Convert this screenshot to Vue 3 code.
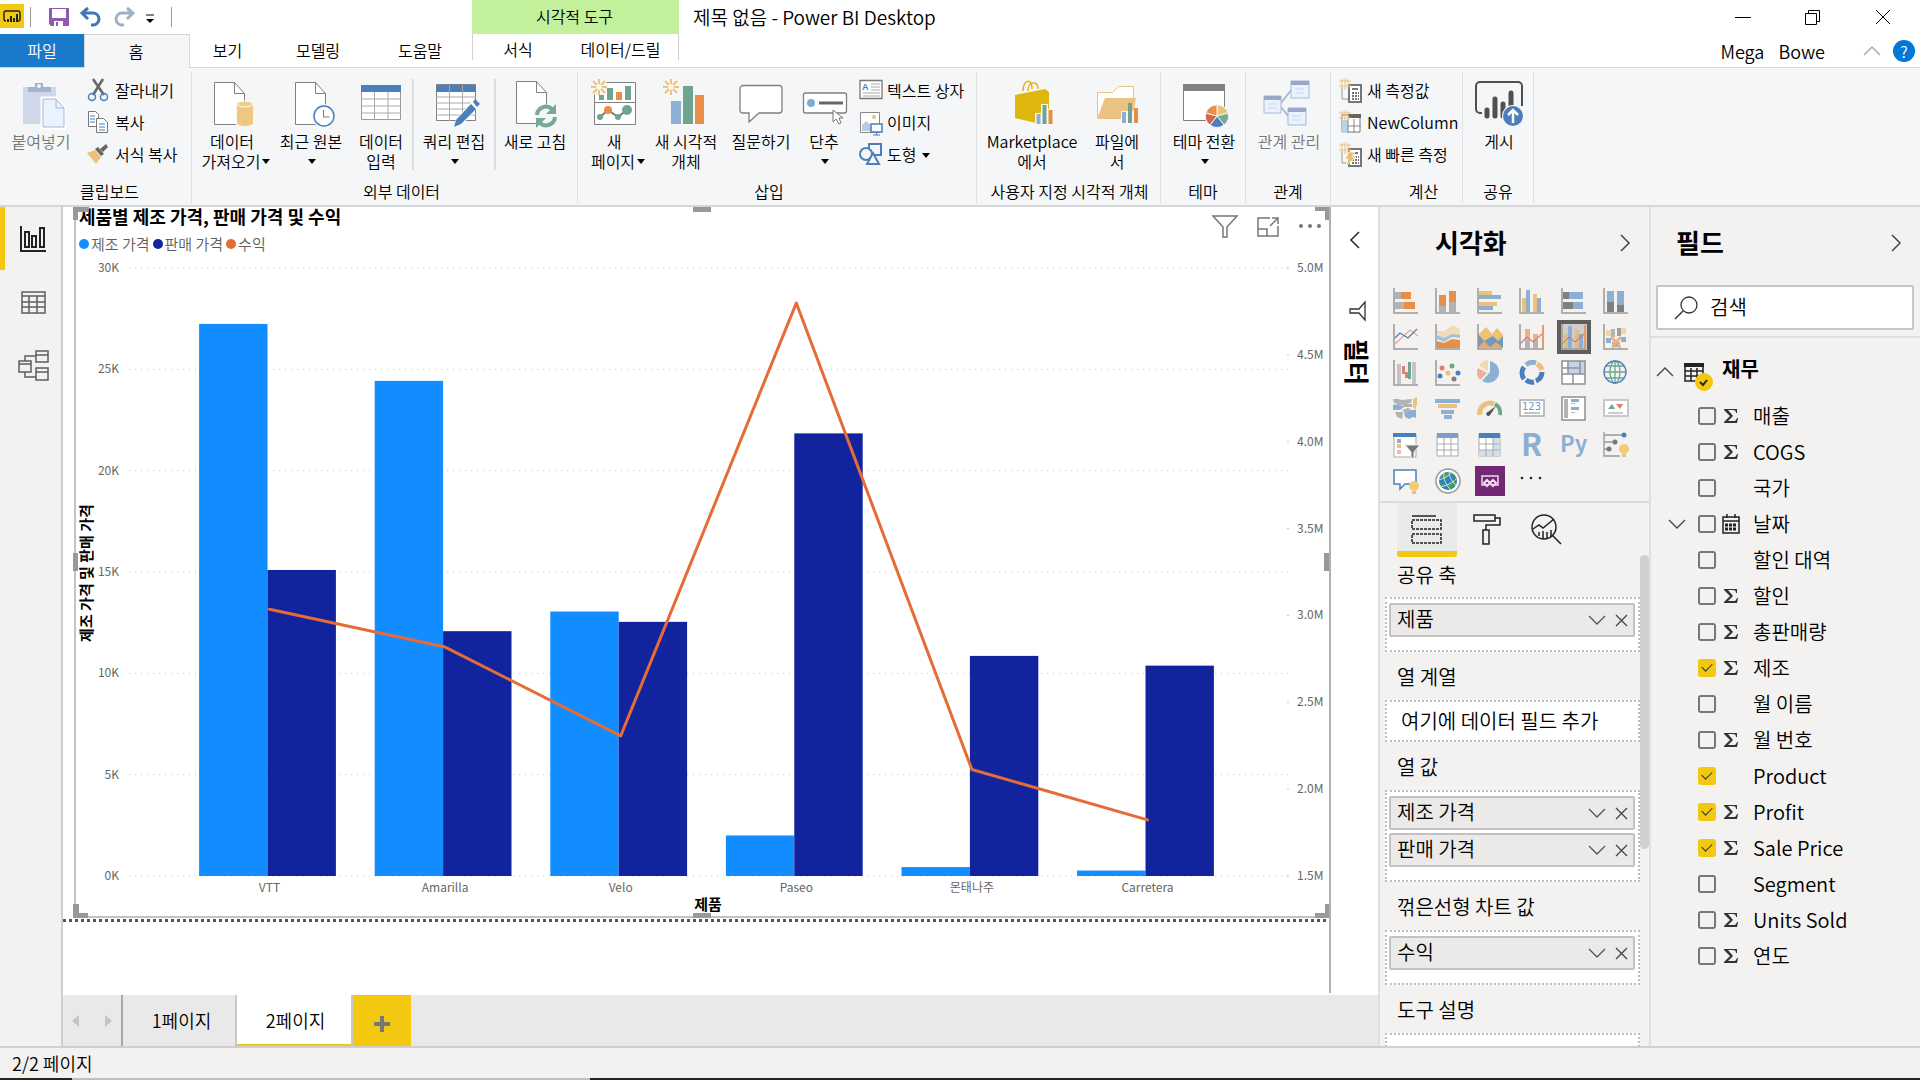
<script setup>
import { ref } from 'vue'

const star = (x, y) =>
  `<g stroke="#ecc27a" stroke-width="2"><path d="M${x} ${y - 8}v5M${x} ${y + 3}v5M${x - 8} ${y}h5M${x + 3} ${y}h5M${x - 6} ${y - 6}l4 4M${x + 2} ${y + 2}l4 4M${x - 6} ${y + 6}l4-4M${x + 2} ${y - 2}l4-4"/></g>`
const page = (x, y) =>
  `<path d="M${x} ${y}h20l10 11v31h-30z" fill="#fff" stroke="#808080"/><path d="M${x + 20} ${y}v11h10" fill="none" stroke="#808080"/>`
const miniTable = `<path d="M3 5h18v17h-18z" fill="#fff" stroke="#777"/>`
const calc = `<path d="M3 9v12h6" fill="none" stroke="#999"/><rect x="10" y="7" width="12" height="17" fill="#fff" stroke="#777" stroke-width="2"/><path d="M13 11h6" stroke="#777" stroke-width="2"/><path d="M13 15h7M13 18h7M13 21h7" stroke="#777" stroke-width="2" stroke-dasharray="2 1"/>`
const smallStar = `<path d="M6 0v12M0 3h12M0 8h12M3 1v10M9 1v10" stroke="#ecc27a" fill="none"/>`

const big = {
  paste: `<path d="M6 8h33v37H6z" fill="#cfd8e8"/><path d="M11 8h7V4h8v4h8v5H11z" fill="#a3b2cf"/><circle cx="22" cy="7" r="2" fill="#f5f6f7"/><path d="M25 19h14l8 9v21H25z" fill="#eaf3fd" stroke="#fff" stroke-width="3"/><path d="M26 20h13l8 9v19H26z" fill="#eaf3fd" stroke="#a9b8d5"/><path d="M39 20v9h8" fill="none" stroke="#a9b8d5"/>`,
  data: page(6.5, 3.5) + `<path d="M28 23v23c0 3 18 3 18 0V23z" fill="#f5f6f7"/><path d="M29 25v19c0 4 16 4 16 0V25z" fill="#efc77f"/><ellipse cx="37" cy="25" rx="8" ry="3" fill="#f1cd8c" stroke="#fff"/>`,
  recent: page(8.5, 3.5) + `<circle cx="37" cy="37" r="12" fill="#f5f6f7"/><circle cx="37" cy="37" r="10" fill="#fff" stroke="#4a7fbb" stroke-width="1.5"/><path d="M36.500 31v7h6" fill="none" stroke="#777"/>`,
  table: `<path d="M4.500 6.500h39v34h-39z" fill="#fff" stroke="#999"/><path d="M4 6h40v7H4z" fill="#4a7fbb"/><path d="M4 20h40M4 27h40M4 34h40M17.500 13v28M31 13v28" stroke="#aaa"/>`,
  query: `<path d="M6.500 5.500h39v36h-39z" fill="#fff" stroke="#808080"/><path d="M7 6h38v7H7z" fill="#4a7fbb"/><path d="M6 18h40M6 24h40M6 30h40M6 36h40M19.500 6v36M32.500 6v36" stroke="#aaa"/><path d="M23 49l3-9 18-20 6 6-18 20z" fill="#fff"/><path d="M24 48l2-7 15-16 5 5-15 15z" fill="#4a7fbb"/><path d="M43 23l2-3 5 5-3 3z" fill="#4a7fbb"/>`,
  refresh: page(5.5, 2.5) + `<circle cx="35" cy="37" r="12" fill="#f5f6f7"/><g fill="none" stroke="#78a896" stroke-width="4"><path d="M26 36a9 9 0 0 1 15-6"/><path d="M44 38a9 9 0 0 1-15 6"/></g><path d="M45 25v10H35zM25 49V39h10z" fill="#78a896"/>`,
  newpage: `<path d="M4.500 3.500h41v42h-41z" fill="#fff" stroke="#808080"/><path d="M4 23.500h42" stroke="#808080"/><circle cx="9" cy="8" r="9" fill="#f5f6f7"/><path d="M9 16h5v5H9zM17 9h6v12h-6zM35 7h6v14h-6z" fill="#6fa58f"/><path d="M26 13h6v8h-6z" fill="#e88e47"/><path d="M10 38l8-7 10 7 9-7" fill="none" stroke="#777" stroke-width="2"/><g fill="#6fa58f"><circle cx="10" cy="38" r="3"/><circle cx="28" cy="38" r="3"/><circle cx="37" cy="31" r="5"/></g><circle cx="18" cy="31" r="4" fill="#e88e47"/>` + star(9, 8),
  newvisual: `<path d="M9 22h10v23H9z" fill="#8eafd4"/><path d="M21 7h10v38H21z" fill="#6fa58f"/><path d="M33 16h9v29h-9z" fill="#e88e47"/>` + star(9, 8),
  question: `<path d="M6 6.500h36a3 3 0 0 1 3 3V31a3 3 0 0 1-3 3H22l-10 9v-9H6a3 3 0 0 1-3-3V9.500a3 3 0 0 1 3-3z" fill="#fff" stroke="#808080" stroke-width="1.300"/>`,
  button: `<rect x="3.500" y="14" width="43" height="20" rx="2" fill="#fff" stroke="#808080" stroke-width="1.300"/><circle cx="11" cy="24" r="4" fill="#80add4"/><path d="M19 24h24" stroke="#666" stroke-width="3"/><path d="M33 31v12l3-3 3 5 2-1-2-5h4z" fill="#fff" stroke="#777"/>`,
  market: `<path d="M15 12c0-13 10-12 9-2M20 12c0-11 11-10 10-2" fill="none" stroke="#dcb40f" stroke-width="1.500"/><path d="M7 16l30-6 4 3v30l-13 1-21-5z" fill="#dfb60e"/><path d="M28 35h5v10h-5zM34 26h5v19h-5zM40 31h5v14h-5z" stroke="#f5f6f7" fill="#f5f6f7" stroke-width="2"/><path d="M28.500 35h4v10h-4z" fill="#8eafd4"/><path d="M34.500 26h4v19h-4z" fill="#6fa58f"/><path d="M40.500 31h4v14h-4z" fill="#e88e47"/>`,
  file: `<path d="M4.500 39V13.500h15l6-6h15V20" fill="#fff" stroke="#e8c084"/><path d="M12 19h31l-4 21H4z" fill="#eac282"/><path d="M28 32h19v12H28z" fill="#f5f6f7"/><path d="M29 33h4v11h-4z" fill="#8eafd4"/><path d="M35 24h4v20h-4z" fill="#6fa58f"/><path d="M41 29h4v15h-4z" fill="#e88e47"/>`,
  theme: `<path d="M3.500 5.500h41v36h-41z" fill="#fff" stroke="#808080"/><path d="M3 5h42v7H3z" fill="#808080"/><circle cx="37" cy="37" r="12" fill="#f5f6f7"/><g stroke="#f5f6f7"><path d="M37 37V26a11 11 0 0 1 11 8z" fill="#ecc27a"/><path d="M37 37l11-3a11 11 0 0 1-4 12z" fill="#78a896"/><path d="M37 37l7 9a11 11 0 0 1-14 0z" fill="#4a7fbb"/><path d="M37 37l-7 9a11 11 0 0 1-4-12z" fill="#d9634a"/><path d="M37 37l-11-3a11 11 0 0 1 11-8z" fill="#e88e47"/></g>`,
  relation: `<path d="M16 24L27 10M16 28l8 10" stroke="#a9b8d5" stroke-width="2"/><g fill="#eaf3fd" stroke="#a9b8d5"><path d="M26 2h18v17H26zM-1 17h17v17H-1zM23 29h18v17H23z"/></g><path d="M26 2h18v4H26zM-1 17h17v4H-1zM23 29h18v4H23z" fill="#98a9c8"/><path d="M30 10h9M30 14h9M3 25h9M3 29h9M27 37h9M27 41h9" stroke="#cbd9ee"/>`,
  publish: `<path d="M7 34H5a4 4 0 0 1-4-4V7a4 4 0 0 1 4-4h38a4 4 0 0 1 4 4v20" fill="none" stroke="#505050" stroke-width="2"/><g stroke="#505050" stroke-width="5" stroke-linecap="round"><path d="M12 31v6M20 20v17M28 25v12M36 14v20"/></g><circle cx="38" cy="37" r="11" fill="#f5f6f7"/><circle cx="38" cy="37" r="10" fill="#4a7fbb"/><path d="M38 44V32M33 36l5-5 5 5" fill="none" stroke="#fff" stroke-width="2.500"/>`
}

const small = {
  cut: `<path d="M6 1l11 16M16 1L6 17" stroke="#666" stroke-width="2.500"/><g fill="none" stroke="#4a7fbb" stroke-width="1.500"><circle cx="5" cy="19" r="3.500"/><circle cx="17" cy="19" r="3.500"/></g>`,
  copy: `<g fill="#fff" stroke="#777"><path d="M1.500 1.500h7l3 3v12h-10z"/><path d="M9.500 8.500h7l4 4v10h-11z"/></g><path d="M3 6h5M3 9h5M3 12h5M12 14h6M12 17h6M12 20h6" stroke="#4a7fbb"/>`,
  brush: `<path d="M0 11l8-3 6 7-5 7z" fill="#ecc27a"/><path d="M8 7l3-2 6 7-3 2z" fill="#666"/><path d="M13 7l6-5 2 3-5 5z" fill="#666"/>`,
  textbox: `<path d="M1 2.500h22v18H1z" fill="#fff" stroke="#777" stroke-width="1.300"/><text x="3" y="12" font-size="9" font-weight="700" fill="#4a7fbb" font-family="Liberation Sans, sans-serif">A</text><path d="M12 6h9M12 9h9M12 12h9M4 15h17M4 18h17" stroke="#aaa"/>`,
  image: `<path d="M1.500 2.500h19v20h-19z" fill="#fff" stroke="#888"/><circle cx="15" cy="7" r="2" fill="#ecc27a"/><path d="M3 21v-6l4-4 6 5v5z" fill="#b9cbe2"/><path d="M12 14h11v8H12z" fill="#fff" stroke="#4a7fbb" stroke-width="1.500"/><path d="M17.500 22v3M14 25h7" stroke="#4a7fbb"/>`,
  shape: `<g fill="#f5f6f7" stroke="#4a7fbb" stroke-width="2"><path d="M10 2h12v11H10z"/><circle cx="7" cy="12" r="6"/><path d="M14 11l6 11H8z"/></g>`,
  measure: calc + smallStar,
  column: miniTable + `<path d="M3 10h6v13H3z" fill="#b9d3ec"/><path d="M9 4h13v4H9z" fill="#666"/><path d="M9 9v14M15 9v14M9 16h13" stroke="#888"/>` + smallStar,
  quick: calc + `<path d="M10 10h6l-3 5h4L7 24l2-7H6z" fill="#eebc6c" stroke="#f5f6f7"/>` + smallStar
}

const groups = [
  { name: '클립보드', cls: 'g-clip', items: [
    { icon: 'paste', text: '붙여넣기', w: 'w82', off: true },
    { list: [{ icon: 'cut', text: '잘라내기' }, { icon: 'copy', text: '복사' }, { icon: 'brush', text: '서식 복사' }] }] },
  { name: '외부 데이터', cls: 'g-data', items: [
    { icon: 'data', text: '데이터', text2: '가져오기', arrow: true, w: 'w80' },
    { icon: 'recent', text: '최근 원본', arrow: true, w: 'w78' },
    { icon: 'table', text: '데이터', text2: '입력', w: 'w62' },
    { sep: true },
    { icon: 'query', text: '쿼리 편집', arrow: true, w: 'w80' },
    { sep: true },
    { icon: 'refresh', text: '새로 고침', w: 'w78' }] },
  { name: '삽입', cls: 'g-insert', items: [
    { icon: 'newpage', text: '새', text2: '페이지', arrow: true, w: 'w72' },
    { icon: 'newvisual', text: '새 시각적', text2: '개체', w: 'w72' },
    { icon: 'question', text: '질문하기', w: 'w78' },
    { icon: 'button', text: '단추', arrow: true, w: 'w48' },
    { list: [{ icon: 'textbox', text: '텍스트 상자' }, { icon: 'image', text: '이미지' }, { icon: 'shape', text: '도형', arrow: true }] }] },
  { name: '사용자 지정 시각적 개체', cls: 'g-custom', items: [
    { icon: 'market', text: 'Marketplace', text2: '에서', w: 'w110' },
    { icon: 'file', text: '파일에', text2: '서', w: 'w60' }] },
  { name: '테마', cls: 'g-theme', items: [{ icon: 'theme', text: '테마 전환', arrow: true, w: 'w86' }] },
  { name: '관계', cls: 'g-theme', items: [{ icon: 'relation', text: '관계 관리', w: 'w86', off: true }] },
  { name: '계산', cls: 'g-calc', items: [
    { list: [{ icon: 'measure', text: '새 측정값' }, { icon: 'column', text: 'NewColumn' }, { icon: 'quick', text: '새 빠른 측정' }] }] },
  { name: '공유', cls: 'g-share', items: [{ icon: 'publish', text: '게시', w: 'w72' }] }
]

const ax = '<path d="M1 0v25h24" fill="none" stroke="#999" stroke-width="1.500"/>'
const bars = list => list.map(([x, y, w, h, c]) => `<path d="M${x} ${y}h${w}v${h}h${-w}z" fill="${c}"/>`).join('')
const O = '#e88e47', G = '#b3b3b3', B = '#8eafd4', Y = '#ecc27a', D = '#808080', N = '#4a7fbb', T = '#6fa58f', R = '#df7f6c'
const bulb = (x, y) => `<circle cx="${x}" cy="${y}" r="5" fill="#f0cc72"/><path d="M${x - 2} ${y + 5}h4v3h-4z" fill="#d8c59a"/>`
const visuals = [
  bars([[2, 4, 6, 7, G], [8, 4, 10, 7, O], [2, 14, 9, 7, G], [11, 14, 11, 7, O]]) + ax,
  bars([[4, 7, 7, 11, O], [4, 18, 7, 6, G], [14, 3, 7, 11, O], [14, 14, 7, 10, G]]) + ax,
  bars([[2, 3, 13, 4, Y], [2, 7, 22, 4, B], [2, 14, 18, 4, Y], [2, 18, 14, 4, B]]) + ax,
  bars([[3, 10, 4, 14, Y], [7, 2, 4, 22, B], [14, 6, 4, 18, Y], [18, 10, 4, 14, B]]) + ax,
  bars([[2, 4, 6, 7, D], [8, 4, 14, 7, B], [2, 14, 10, 7, D], [12, 14, 10, 7, B]]) + ax,
  bars([[4, 3, 7, 11, B], [4, 14, 7, 10, D], [14, 3, 7, 14, B], [14, 17, 7, 7, D]]) + ax,
  ax + `<path d="M2 20L17 6l8 6" fill="none" stroke="#eaa89c" stroke-width="1.300"/><path d="M2 14l5-5 8 5 9-9" fill="none" stroke="${N}" stroke-width="1.300"/>`,
  `<path d="M2 7h7l9-6 7 4v8l-8-1-7 3-8-5z" fill="#f2dcb6"/><path d="M2 11l7 3 8-4 8 1v3l-8-1-8 5-7-3z" fill="#9fc2da"/><path d="M2 17l7 2 8-4 8 1v8H2z" fill="${O}"/>` + ax,
  `<path d="M1 11l8-8 6 7 5-6 6 7v8H1z" fill="#eec272"/><path d="M1 10l6 7 9-5 5 5 5-5v12H1z" fill="#6f9bbd"/><path d="M1 24l6-7 6 6 6-5 7 6z" fill="#f3a56a"/>` + ax,
  bars([[6, 5, 5, 11, '#efb186'], [6, 16, 5, 8, G], [14, 10, 5, 6, '#efb186'], [14, 16, 5, 8, G], [23, 1, 2, 24, '#e99a5c']]) + `<path d="M1 20l7-7 6 5 9-8" fill="none" stroke="${R}" stroke-width="1.300"/>` + ax,
  bars([[3, 10, 4, 14, '#dfbd84'], [7, 2, 4, 22, B], [14, 6, 4, 18, '#dfbd84'], [18, 10, 4, 14, B], [23, 1, 2, 24, '#e99a5c']]) + `<path d="M1 20l7-7 6 5 9-8" fill="none" stroke="#d9634a"/>` + ax,
  bars([[3, 6, 5, 6, '#f0d5a6'], [8, 5, 4, 8, G], [14, 4, 4, 8, '#a89f92'], [18, 4, 5, 6, '#f0d5a6'], [3, 14, 5, 5, B], [18, 13, 5, 5, B], [9, 18, 8, 5, B]]) + `<path d="M8 13l4 4-2 7M18 13l-4 4 3 7" fill="none" stroke="#f0b080" stroke-width="3"/>` + ax,
  bars([[4, 4, 4, 20, '#c4c4c4'], [9, 6, 3, 8, R], [12, 12, 3, 6, R], [15, 2, 3, 17, T], [19, 2, 4, 22, '#c4c4c4']]) + ax,
  ax + `<circle cx="7" cy="8" r="2.500" fill="${R}"/><circle cx="17" cy="6" r="2.500" fill="${T}"/><circle cx="5" cy="16" r="2.500" fill="${N}"/><circle cx="13" cy="13" r="2.500" fill="${Y}"/><circle cx="23" cy="13" r="2.500" fill="${N}"/><circle cx="19" cy="19" r="2.500" fill="${D}"/>`,
  `<path d="M13 12V1a11 11 0 1 1-8 20z" fill="${B}"/><path d="M11 11L2 6a11 11 0 0 1 9-6z" fill="#f0d9b0"/><path d="M10 13l-7 7a11 11 0 0 1-2-12z" fill="#ecb0a2"/>`,
  `<g fill="none" stroke-width="5"><path d="M7 5a10 10 0 0 1 10-2" stroke="${B}"/><path d="M18 4a10 10 0 0 1 5 6" stroke="${Y}"/><path d="M23 12a10 10 0 0 1-6 9M15 22a10 10 0 0 1-8-2M5 19A10 10 0 0 1 5 7" stroke="${N}"/></g>`,
  `<path d="M1 1h23v23H1z" fill="#fff"/><path d="M7 1h17v13H7z" fill="#c3d4ea"/><path d="M1 1h23v23H1zM1 14h23M7 1v13M7 8h12M19 1v13M12 14v10M1 8h6" fill="none" stroke="#909090" stroke-width="1.500"/>`,
  `<g fill="none" stroke-width="1.300"><g stroke="${T}"><ellipse cx="12" cy="12" rx="5" ry="11"/><path d="M12 1v22M1 12h22M3 6h18M3 18h18"/></g><circle cx="12" cy="12" r="11" stroke="${N}"/></g>`,
  `<path d="M0 3l5 0 4 1 10-1-1 4-9 2-8-2zM10 8h9v3h-9zM2 16h8l-1 7-5-2zM9 14l6-2 3 1-6 4z" fill="#b3b3b3"/><path d="M0 9l6-1 5 3-4 3H0zM11 17l6-3h6v8l-3-1-4 2-4-2z" fill="${B}"/><path d="M20 3l4-2v7l-2 6-2-3z" fill="${Y}"/>`,
  bars([[0, 3, 25, 4, B], [3, 8, 19, 4, Y], [6, 14, 13, 4, B], [9, 19, 8, 4, B]]),
  `<path d="M3 19a10 10 0 0 1 14-11" fill="none" stroke="${Y}" stroke-width="5"/><path d="M18 8a10 10 0 0 1 5 11" fill="none" stroke="${T}" stroke-width="4"/><path d="M19 10l-6 9a2 2 0 1 1-2-3z" fill="#505050"/>`,
  `<path d="M1 4h24v16H1z" fill="#fff" stroke="#aaa" stroke-width="1.500"/><text x="3" y="14" font-size="10" font-weight="400" fill="#6c99c8" font-family="DejaVu Sans, sans-serif">123</text><path d="M5 17h16" stroke="#888"/>`,
  `<path d="M1 1h23v23H1z" fill="#fff" stroke="#909090" stroke-width="1.500"/>` + bars([[3, 3, 4, 19, G], [10, 3, 8, 3, B], [10, 7, 4, 1, G], [10, 11, 8, 3, B], [10, 16, 4, 1, G]]),
  `<path d="M1 4h24v16H1z" fill="#fff" stroke="#bbb" stroke-width="1.500"/><path d="M5 13l4-5 3 5z" fill="${T}"/><path d="M13 8h7l-3 5z" fill="${R}"/><path d="M5 17h15" stroke="#999"/>`,
  `<path d="M1 2h22v23H1z" fill="#fff" stroke="#aaa"/>` + bars([[0, 1, 23, 4, N], [4, 7, 4, 4, B], [4, 12, 4, 4, Y], [4, 18, 4, 4, '#efb9ac']]) + `<path d="M12 13h15l-6 7v7l-3-2v-5z" fill="#777" stroke="#f3f2f1"/>`,
  `<path d="M2 2h21v22H2z" fill="#fff" stroke="#aaa"/><path d="M2 1h21v5H2z" fill="#7b9fca"/><path d="M2 12h21M2 18h21M9 6v18M16 6v18" stroke="#aaa"/>`,
  `<path d="M2 2h21v22H2z" fill="#fff" stroke="#aaa"/><path d="M16 6h7v18H2v-6h14z" fill="#cfdfee"/><path d="M2 1h21v5H2z" fill="${N}"/><path d="M2 12h21M2 18h21M9 6v18M16 6v18" stroke="#aaa"/>`,
  `<text x="2" y="24" font-size="31" font-weight="700" fill="${B}" font-family="Noto Sans CJK KR, sans-serif">R</text>`,
  `<text x="-1" y="20" font-size="22" font-weight="700" fill="${B}" font-family="Noto Sans CJK KR, sans-serif">Py</text>`,
  `<path d="M1 0v24h16M1 3h20M1 10h12M1 17h6" fill="none" stroke="#999" stroke-width="1.300"/><circle cx="21" cy="3" r="2.500" fill="${N}"/><circle cx="12" cy="10" r="2.500" fill="#777"/><circle cx="6" cy="17" r="2.500" fill="#777"/>` + bulb(21, 17),
  `<path d="M1 2h22v14H12l-5 5v-5H1z" fill="#fff" stroke="${N}" stroke-width="1.500"/>` + bulb(21, 18),
  `<circle cx="13" cy="13" r="12" fill="#fff" stroke="#999" stroke-width="1.500"/><circle cx="13" cy="13" r="9" fill="#2f7fc1"/><path d="M5 9l6-5 4 3-6 5zM12 18l8-6 1 4-6 5zM5 14l4 2 1 4-4-2zM16 6l4 1 1 4z" fill="#3fa648"/><path d="M3 12c6-1 12-5 15-9M4 19c8-1 15-5 19-10M9 4c-1 7 2 14 8 19M14 3c0 6 3 11 8 15" fill="none" stroke="#ddd"/>`,
  `<path d="M-2-2h30v30H-2z" fill="#742774"/><path d="M8 17H5V8h16v9h-3" fill="none" stroke="#f0dcf0" stroke-width="1.500"/><path d="M10 12l3 3-3 3-3-3zM16 12l3 3-3 3-3-3z" fill="none" stroke="#f0dcf0" stroke-width="2"/>`,
  `<g fill="#222"><circle cx="3" cy="10" r="1.300"/><circle cx="12" cy="10" r="1.300"/><circle cx="21" cy="10" r="1.300"/></g>`
]

const wells = [
  { name: '공유 축', items: ['제품'] },
  { name: '열 계열', items: [], hint: '여기에 데이터 필드 추가' },
  { name: '열 값', items: ['제조 가격', '판매 가격'] },
  { name: '꺾은선형 차트 값', items: ['수익'] },
  { name: '도구 설명', items: [] }
]

const fields = ref([
  { name: '매출', kind: 'sum', on: false },
  { name: 'COGS', kind: 'sum', on: false },
  { name: '국가', kind: '', on: false },
  { name: '날짜', kind: 'date', on: false },
  { name: '할인 대역', kind: '', on: false },
  { name: '할인', kind: 'sum', on: false },
  { name: '총판매량', kind: 'sum', on: false },
  { name: '제조', kind: 'sum', on: true },
  { name: '월 이름', kind: '', on: false },
  { name: '월 번호', kind: 'sum', on: false },
  { name: 'Product', kind: '', on: true },
  { name: 'Profit', kind: 'sum', on: true },
  { name: 'Sale Price', kind: 'sum', on: true },
  { name: 'Segment', kind: '', on: false },
  { name: 'Units Sold', kind: 'sum', on: false },
  { name: '연도', kind: 'sum', on: false }
])

const products = [
  { name: 'VTT', cost: 27.24, sale: 15.1, profit: 3.036 },
  { name: 'Amarilla', cost: 24.43, sale: 12.08, profit: 2.818 },
  { name: 'Velo', cost: 13.05, sale: 12.54, profit: 2.307 },
  { name: 'Paseo', cost: 2, sale: 21.84, profit: 4.798 },
  { name: '몬태나주', cost: 0.44, sale: 10.86, profit: 2.113 },
  { name: 'Carretera', cost: 0.27, sale: 10.38, profit: 1.823 }
]
const BASE = 620
const K = 608 / 30
const M = 608 / 3.5
const BAR = 68.4
const mid = i => 191.5 + i * 175.6
const yProfit = v => BASE - (v - 1.5) * M
const line = products.map((p, i) => `${mid(i) + 2},${yProfit(p.profit)}`).join(' ')
const leftTicks = [0, 5, 10, 15, 20, 25, 30]
const rightTicks = [1.5, 2, 2.5, 3, 3.5, 4, 4.5, 5]
</script>

<template>
  <div class="app">
    <header class="titlebar">
      <div class="quick">
        <svg class="logo" viewBox="0 0 24 24"><path d="M0 0h24v24H0z" fill="#f2c811" /><path d="M6 17a2 2 0 0 1-2-2V9a2 2 0 0 1 2-2h12a2 2 0 0 1 2 2v6a2 2 0 0 1-2 2" fill="none" stroke="#222" stroke-width="1.500" /><path d="M8 15v3M11 12v6M14 14v4M17 10v8" stroke="#222" stroke-width="2" /></svg>
        <i class="vsep"></i>
        <button class="qb save" aria-label="저장"><svg width="20" height="20" viewBox="0 0 20 20"><path d="M0 1h20v18H2l-2-2z" fill="#8e5bb0" /><path d="M3 2h14v9H3zM5 14h9v5H5z" fill="#fff" /><path d="M7 15h2v4H7z" fill="#8e5bb0" /></svg></button>
        <button class="qb" aria-label="실행 취소"><svg width="22" height="20" viewBox="0 0 22 20"><path d="M2 6h11a6 6 0 0 1 0 12h-2M8 1L2 6l6 6" fill="none" stroke="#3f77b5" stroke-width="3" /></svg></button>
        <button class="qb" aria-label="다시 실행"><svg width="22" height="20" viewBox="0 0 22 20"><path d="M20 6H9a6 6 0 0 0 0 12h2M14 1l6 5-6 6" fill="none" stroke="#a3afc8" stroke-width="3" /></svg></button>
        <button class="qb more" aria-label="사용자 지정"><svg width="10" height="10" viewBox="0 0 10 10"><path d="M1 1h8" stroke="#000" /><path d="M1 5h8L5 9z" /></svg></button>
        <i class="vsep last"></i>
      </div>
      <div class="context-title">시각적 도구</div>
      <h1 class="window-title">제목 없음 - Power BI Desktop</h1>
      <div class="window-buttons">
        <button aria-label="최소화"><svg width="16" height="16" viewBox="0 0 16 16"><path d="M0 8.500h16" stroke="#000" /></svg></button>
        <button aria-label="이전 크기로"><svg width="16" height="16" viewBox="0 0 16 16"><path d="M.5 4.500h11v11H.5zM3.500 4V1.500h11v11H12" fill="none" stroke="#000" /></svg></button>
        <button aria-label="닫기"><svg width="16" height="16" viewBox="0 0 16 16"><path d="M1 1l14 14M15 1L1 15" stroke="#000" /></svg></button>
      </div>
    </header>

    <nav class="tabs">
      <button class="tab file">파일</button>
      <button class="tab home">홈</button>
      <button class="tab view">보기</button>
      <button class="tab model">모델링</button>
      <button class="tab help">도움말</button>
      <div class="context-tabs">
        <button class="tab format">서식</button>
        <button class="tab drill">데이터/드릴</button>
      </div>
      <div class="account">
        <span>Mega</span><span>Bowe</span>
        <button class="fold" aria-label="리본 접기"><svg width="18" height="12" viewBox="0 0 18 12"><path d="M1 10l8-8 8 8" fill="none" stroke="#aaa" stroke-width="1.500" /></svg></button>
        <button class="about" aria-label="도움말">?</button>
      </div>
    </nav>

    <div class="ribbon">
      <section v-for="g in groups" :key="g.name" class="group" :class="g.cls">
        <div class="group-body">
          <template v-for="(it, i) in g.items" :key="i">
            <i v-if="it.sep" class="rsep"></i>
            <div v-else-if="it.list" class="small-list">
              <button v-for="s in it.list" :key="s.text" class="small-btn">
                <svg width="24" height="26" viewBox="0 0 24 26" v-html="small[s.icon]"></svg>
                <span>{{ s.text }}</span><i v-if="s.arrow" class="arrow"></i>
              </button>
            </div>
            <button v-else class="big-btn" :class="[it.w, { off: it.off }]">
              <svg width="48" height="52" viewBox="0 0 48 52" v-html="big[it.icon]"></svg>
              <span>{{ it.text }}</span>
              <span v-if="it.text2 || it.arrow" class="second" :class="{ both: it.text2 && it.arrow }">{{ it.text2 }}<i v-if="it.arrow" class="arrow"></i></span>
            </button>
          </template>
        </div>
        <div class="group-name">{{ g.name }}</div>
      </section>
    </div>

    <div class="body">
      <nav class="rail">
        <button class="rail-btn active" aria-label="보고서"><svg width="30" height="30" viewBox="0 0 30 30"><path d="M3 2v25h25" fill="none" stroke="#222" stroke-width="2" /><path d="M7 8h4v15H7zM14 12h4v11h-4zM22 4h4v19h-4z" fill="none" stroke="#222" stroke-width="2" /></svg></button>
        <button class="rail-btn" aria-label="데이터"><svg width="30" height="30" viewBox="0 0 30 30"><path d="M4 5h23v21H4zM4 9h23M4 15h23M4 20h23M11 9v17M19 9v17" fill="none" stroke="#605e5c" stroke-width="1.500" /></svg></button>
        <button class="rail-btn" aria-label="모델"><svg width="32" height="32" viewBox="0 0 32 32"><path d="M2 12h12v11H2zM2 15h12M19 2h12v11H19zM19 6h12M19 19h12v12H19zM19 23h12M8 12V7h11M8 23v5h11" fill="none" stroke="#605e5c" stroke-width="1.500" /></svg></button>
      </nav>

      <div class="center">
        <div class="workspace">
          <main class="canvas">
            <article class="visual">
              <i class="handle tl"></i><i class="handle tc"></i><i class="handle tr"></i>
              <i class="handle ml"></i><i class="handle mr"></i>
              <i class="handle bl"></i><i class="handle bc"></i><i class="handle br"></i>
              <div class="visual-head">
                <div>
                  <h2>제품별 제조 가격, 판매 가격 및 수익</h2>
                  <ul class="legend">
                    <li class="c1">제조 가격</li>
                    <li class="c2">판매 가격</li>
                    <li class="c3">수익</li>
                  </ul>
                </div>
                <div class="visual-actions">
                  <button aria-label="필터"><svg width="26" height="24" viewBox="0 0 26 24"><path d="M1 1h24L15 12v10h-4V12z" fill="none" stroke="#777" stroke-width="1.500" /></svg></button>
                  <button aria-label="포커스 모드"><svg width="22" height="20" viewBox="0 0 22 20"><path d="M13 1H1v18h20V9M1 12h9v7M13 9l8-8M15 1h6v6" fill="none" stroke="#777" stroke-width="1.500" /></svg></button>
                  <button aria-label="추가 옵션"><svg width="24" height="20" viewBox="0 0 24 20"><g fill="#777"><circle cx="3" cy="9" r="2" /><circle cx="12" cy="9" r="2" /><circle cx="21" cy="9" r="2" /></g></svg></button>
                </div>
              </div>
              <svg class="plot" viewBox="0 0 1253 660">
                <g v-for="t in leftTicks" :key="'l' + t">
                  <line x1="53" x2="1212" :y1="BASE - t * K" :y2="BASE - t * K" class="grid" />
                  <text x="43" :y="BASE - t * K + 4" class="tick end">{{ t }}K</text>
                </g>
                <g v-for="t in rightTicks" :key="'r' + t">
                  <line x1="1211" x2="1213" :y1="yProfit(t)" :y2="yProfit(t)" stroke="#c8c8c8" />
                  <text x="1221" :y="yProfit(t) + 4" class="tick">{{ t.toFixed(1) }}M</text>
                </g>
                <g v-for="(p, i) in products" :key="p.name">
                  <rect :x="mid(i) - BAR" :y="BASE - p.cost * K" :width="BAR" :height="p.cost * K" fill="#118dff" />
                  <rect :x="mid(i)" :y="BASE - p.sale * K" :width="BAR" :height="p.sale * K" fill="#12239e" />
                  <text :x="mid(i) + 2" y="636" class="tick mid">{{ p.name }}</text>
                </g>
                <polyline :points="line" fill="none" stroke="#e66c37" stroke-width="3" stroke-linejoin="round" stroke-linecap="round" />
                <text x="632" y="654" class="axis-name">제품</text>
                <text x="16" y="317" class="axis-name" transform="rotate(-90 16 317)">제조 가격 및 판매 가격</text>
              </svg>
            </article>
          </main>
          <aside class="filters">
            <button aria-label="필터 펼치기"><svg width="12" height="18" viewBox="0 0 12 18"><path d="M10 1L2 9l8 8" fill="none" stroke="#222" stroke-width="1.500" /></svg></button>
            <svg class="funnel" width="18" height="20" viewBox="0 0 18 20"><path d="M16 1v18l-6-7H1V8h9z" fill="none" stroke="#333" stroke-width="1.300" /></svg>
            <h2>필터</h2>
          </aside>
        </div>
        <footer class="pages">
          <div class="page-nav">
            <button aria-label="이전 페이지"><svg width="8" height="12" viewBox="0 0 8 12"><path d="M7 0v12L0 6z" fill="#c4c4c4" /></svg></button>
            <button aria-label="다음 페이지"><svg width="8" height="12" viewBox="0 0 8 12"><path d="M1 0v12l7-6z" fill="#c4c4c4" /></svg></button>
          </div>
          <button class="page">1페이지</button>
          <button class="page current">2페이지</button>
          <button class="add" aria-label="새 페이지"><svg width="16" height="16" viewBox="0 0 16 16"><path d="M8 0v16M0 8h16" stroke="#777" stroke-width="4" /></svg></button>
        </footer>
      </div>

      <aside class="viz">
        <div class="pane-head"><h2>시각화</h2><button aria-label="접기"><svg width="12" height="18" viewBox="0 0 12 18"><path d="M2 1l8 8-8 8" fill="none" stroke="#444" stroke-width="1.500" /></svg></button></div>
        <div class="gallery">
          <button v-for="(v, i) in visuals" :key="i" :class="{ chosen: i === 10 }" :aria-label="'시각적 개체 ' + (i + 1)">
            <svg width="26" height="26" viewBox="0 0 26 26" v-html="v"></svg>
          </button>
        </div>
        <div class="viz-tabs">
          <button class="active" aria-label="필드"><svg width="32" height="32" viewBox="0 0 32 32"><path d="M1 2h24" stroke="#222" stroke-width="1.500" /><path d="M1 6h29v9H1zM1 20h29v9H1z" fill="none" stroke="#222" stroke-width="1.500" stroke-dasharray="3 1" /></svg></button>
          <button aria-label="서식"><svg width="32" height="32" viewBox="0 0 32 32"><path d="M3 1h21v6H3zM24 4h5v7H15v5M12 16h6v14h-6z" fill="none" stroke="#222" stroke-width="1.500" /></svg></button>
          <button aria-label="분석"><svg width="32" height="32" viewBox="0 0 32 32"><path d="M21 21l9 9M2 15l6-4 4 3 11-9M8 18v4M12 17v8M16 18v7M20 16v7" fill="none" stroke="#222" stroke-width="1.500" /><circle cx="13" cy="13" r="12" fill="none" stroke="#222" stroke-width="1.500" /></svg></button>
        </div>
        <div class="wells">
          <section v-for="w in wells" :key="w.name">
            <h3>{{ w.name }}</h3>
            <div class="well" :class="{ empty: !w.items.length }">
              <div v-for="it in w.items" :key="it" class="chip">
                <span>{{ it }}</span>
                <button aria-label="메뉴"><svg width="18" height="12" viewBox="0 0 18 12"><path d="M1 2l8 8 8-8" fill="none" stroke="#555" stroke-width="1.300" /></svg></button>
                <button aria-label="제거"><svg width="13" height="13" viewBox="0 0 13 13"><path d="M1 1l11 11M12 1L1 12" stroke="#444" stroke-width="1.300" /></svg></button>
              </div>
              <span v-if="w.hint">{{ w.hint }}</span>
            </div>
          </section>
          <i class="thumb"></i>
        </div>
      </aside>

      <aside class="fields">
        <div class="pane-head"><h2>필드</h2><button aria-label="접기"><svg width="12" height="18" viewBox="0 0 12 18"><path d="M2 1l8 8-8 8" fill="none" stroke="#444" stroke-width="1.500" /></svg></button></div>
        <label class="search">
          <svg width="24" height="24" viewBox="0 0 24 24"><circle cx="15" cy="9" r="8" fill="none" stroke="#333" stroke-width="1.300" /><path d="M9 15l-8 8" stroke="#333" stroke-width="1.500" /></svg>
          <input type="text" placeholder="검색" aria-label="검색" />
        </label>
        <div class="tree">
          <div class="table-row">
            <svg class="fold-up" width="18" height="12" viewBox="0 0 18 12"><path d="M1 10l8-8 8 8" fill="none" stroke="#444" stroke-width="1.300" /></svg>
            <svg width="30" height="30" viewBox="0 0 30 30"><path d="M1 2h18v17H1zM1 9h18M1 14h18M7 6v13M13 6v13" fill="none" stroke="#222" stroke-width="1.500" /><path d="M0 1h20v4H0z" fill="#222" /><circle cx="20" cy="20" r="9" fill="#f2c811" /><path d="M16 20l3 3 4-5" fill="none" stroke="#222" stroke-width="2" /></svg>
            <strong>재무</strong>
          </div>
          <label v-for="f in fields" :key="f.name" class="field">
            <span class="expand"><svg v-if="f.kind === 'date'" width="18" height="12" viewBox="0 0 18 12"><path d="M1 2l8 8 8-8" fill="none" stroke="#444" stroke-width="1.300" /></svg></span>
            <input v-model="f.on" type="checkbox" />
            <span class="kind" :class="f.kind">
              <svg v-if="f.kind === 'sum'" width="14" height="16" viewBox="0 0 14 16"><path d="M0 1h13v4h-1c0-2-1-3-3-3H4l5 6-5 5h6c2 0 2-1 3-3h1l-1 5H0v-1l6-6-6-6z" fill="#333" /></svg>
              <svg v-else-if="f.kind === 'date'" width="18" height="20" viewBox="0 0 18 20"><path d="M1 3h16v16H1zM1 7h16M5 0v4M13 0v4" fill="none" stroke="#222" stroke-width="1.500" /><path d="M3 11h12M3 15h12" stroke="#222" stroke-width="3" stroke-dasharray="3 1" /></svg>
            </span>
            <span>{{ f.name }}</span>
          </label>
        </div>
      </aside>
    </div>

    <footer class="status">2/2 페이지</footer>
    <div class="taskbar"><i></i></div>
  </div>
</template>

<style>
body { margin: 0; }
</style>

<style scoped>
* { box-sizing: border-box; }
.app { display: flex; flex-direction: column; height: 100vh; overflow: hidden; background: #fff; color: #000; font-family: "Noto Sans CJK KR", "Noto Sans", sans-serif; font-size: 16px; font-weight: 350; }
button { border: 0; padding: 0; margin: 0; background: none; font: inherit; color: inherit; }
h1, h2, h3, ul { margin: 0; padding: 0; }
svg { display: block; flex: none; overflow: visible; }

.titlebar { display: flex; height: 34px; flex: none; }
.quick { display: flex; align-items: center; width: 472px; }
.logo { width: 24px; height: 24px; margin-bottom: 2px; }
.vsep { width: 1px; height: 20px; background: #999; margin-left: 6px; }
.vsep.last { margin-left: 16px; }
.qb { margin-left: 11px; }
.qb.save { margin-left: 18px; }
.qb.more { margin: 4px 0 0 10px; }
.context-title { width: 207px; padding: 0 2px 2px 0; background: #c3f09b; display: flex; align-items: center; justify-content: center; line-height: 30px; }
.window-title { font-size: 19px; font-weight: 350; line-height: 34px; margin-left: 14px; }
.window-buttons { margin-left: auto; display: flex; padding-right: 2px; }
.window-buttons button { width: 70px; display: grid; place-items: center; }

.tabs { display: flex; height: 34px; flex: none; border-bottom: 1px solid #d5d6d7; }
.tab { text-align: center; line-height: 30px; padding-bottom: 2px; }
.file { width: 84px; background: #1979ca; color: #fff; }
.home { width: 106px; height: 34px; background: #f5f6f7; border: 1px solid #d5d6d7; border-bottom: 0; position: relative; line-height: 28px; padding-right: 2px; }
.view { width: 75px; }
.model { width: 106px; }
.help { width: 98px; margin-right: 3px; }
.context-tabs { display: flex; width: 207px; height: 26px; border: solid #d0d0d0; border-width: 0 1px; }
.format { width: 90px; }
.drill { width: 115px; }
.account { margin-left: auto; display: flex; align-items: center; font-size: 18px; gap: 14px; padding-right: 5px; }
.fold { margin: 0 -2px 0 24px; }
.about { width: 22px; height: 22px; border-radius: 50%; background: #0078d7; color: #fff; font-size: 16px; line-height: 22px; }

.ribbon { display: flex; height: 139px; flex: none; background: #f5f6f7; border-bottom: 2px solid #d5d6d7; padding: 4px 0 2px; }
.group { border-right: 1px solid #dfe0e2; display: flex; flex-direction: column; }
.group-body { display: flex; height: 109px; padding-top: 7px; }
.group-name { text-align: center; line-height: 20px; white-space: nowrap; }
.g-clip { width: 192px; } .g-clip .group-name { padding-left: 28px; }
.g-data { width: 386px; } .g-data .group-name { padding-left: 34px; }
.g-insert { width: 399px; } .g-insert .group-name { padding-right: 16px; }
.g-insert .small-list { margin-left: 11px; }
.g-custom { width: 184px; } .g-custom .group-name { padding-left: 2px; }
.g-theme { width: 85px; }
.g-calc { width: 132px; } .g-calc .group-name { padding-left: 54px; }
.g-calc .small-list { margin-left: 8px; }
.g-share { width: 71px; }
.rsep { width: 2px; height: 91px; background: #dcdddf; }
.big-btn { display: flex; flex-direction: column; align-items: center; justify-content: flex-start; line-height: 20px; white-space: nowrap; height: 94px; flex: none; }
.big-btn.off { color: #777; }
.second { display: flex; align-items: center; height: 20px; }
.second.both { padding-left: 8px; }
.second > .arrow:only-child { margin-left: 2px; }
.w48 { width: 48px; } .w60 { width: 60px; } .w62 { width: 62px; } .w72 { width: 72px; }
.w78 { width: 78px; } .w80 { width: 80px; } .w82 { width: 82px; } .w86 { width: 86px; } .w110 { width: 110px; }
.arrow { border: 4px solid transparent; border-top: 5px solid #000; border-bottom: 0; margin-left: 2px; }
.small-list { display: flex; flex-direction: column; margin-left: 5px; }
.small-btn { display: flex; align-items: center; height: 32px; gap: 4px; white-space: nowrap; line-height: 20px; margin-top: -4px; margin-bottom: 4px; }
.small-btn span { padding-bottom: 2px; }

.body { display: flex; flex: 1; min-height: 0; }
.rail { width: 63px; background: #f3f2f1; border-right: 2px solid #cfcfcf; flex: none; }
.rail-btn { width: 100%; height: 63px; display: grid; place-items: center; padding-left: 5px; border-left: 0 solid #f2c811; }
.rail-btn.active { border-left-width: 5px; padding-left: 0; }
.center { flex: 1; min-width: 0; display: flex; flex-direction: column; }
.workspace { flex: 1; min-height: 0; display: flex; }
.canvas { flex: 1; min-width: 0; border-right: 2px solid #b0b0b0; margin-bottom: 2px; }
.canvas::after { content: ""; display: block; height: 3px; margin-top: 1px; background: repeating-linear-gradient(90deg, #555 0 3px, transparent 3px 6px); }
.visual { position: relative; margin-left: 11px; border: solid #c4c4c4; border-width: 0 0 2px 2px; }
.visual-head { display: flex; justify-content: space-between; height: 49px; padding-left: 3px; }
.visual h2 { font-size: 18px; line-height: 18px; font-weight: 700; }
.legend { list-style: none; display: flex; font-size: 15px; line-height: 20px; margin-top: 9px; color: #605e5c; gap: 3px; }
.legend li { display: flex; align-items: center; gap: 2px; }
.legend li::before { content: ""; width: 10px; height: 10px; border-radius: 50%; background: #118dff; }
.legend .c2::before { background: #12239e; }
.legend .c3::before { background: #e66c37; }
.visual-actions { display: flex; align-items: center; gap: 19px; height: 40px; padding-right: 7px; }
.handle { position: absolute; border: 0 solid #999; }
.tl { left: -3px; top: 0; width: 16px; height: 13px; border-width: 5px 0 0 5px; }
.tr { right: 0; top: 0; width: 14px; height: 13px; border-width: 4px 4px 0 0; }
.bl { left: -3px; bottom: -2px; width: 15px; height: 14px; border-width: 0 0 5px 6px; }
.br { right: 0; bottom: -2px; width: 14px; height: 14px; border-width: 0 4px 5px 0; }
.tc, .bc { left: 50%; width: 18px; border-top-width: 5px; margin-left: -10px; }
.tc { top: 0; }
.bc { bottom: -2px; }
.ml, .mr { top: 50%; height: 18px; border-left-width: 5px; margin-top: -9px; }
.ml { left: -3px; }
.mr { right: 0; }
.plot { width: 100%; height: auto; }
.grid { stroke: #c8c8c8; stroke-dasharray: 1 5; }
.tick { font-size: 12px; fill: #666; font-weight: 400; }
.end { text-anchor: end; }
.mid, .axis-name { text-anchor: middle; }
.axis-name { font-size: 15px; font-weight: 700; }
.filters { width: 47px; flex: none; display: flex; flex-direction: column; align-items: center; padding-top: 24px; }
.funnel { margin: 52px 0 18px 6px; }
.filters h2 { writing-mode: vertical-rl; text-orientation: sideways; font-size: 25px; line-height: 28px; font-weight: 700; margin-left: 6px; }

.pages { display: flex; height: 51px; flex: none; background: #e9e9e9; font-size: 18px; }
.page-nav { display: flex; width: 60px; border-right: 2px solid #a8a8a8; align-items: center; justify-content: space-between; padding: 0 9px; }
.page { width: 114px; border-right: 2px solid #c8c8c8; line-height: 28px; padding: 0 0 2px 5px; }
.page.current { width: 116px; padding-left: 3px; background: linear-gradient(#f2c811, #f2c811) bottom / 100% 2px no-repeat #fff; }
.add { width: 58px; background: #f2c811; display: grid; place-items: center; padding-top: 6px; }

.viz, .fields { background: #f3f2f1; border-left: 2px solid #e1dfdd; flex: none; display: flex; flex-direction: column; overflow: hidden; }
.viz { width: 271px; }
.fields { width: 271px; }
.pane-head { display: flex; align-items: center; justify-content: space-between; height: 72px; flex: none; padding: 0 18px 0 25px; }
.viz .pane-head { padding-left: 55px; }
.pane-head h2 { font-size: 26px; line-height: 32px; font-weight: 700; padding-bottom: 2px; }
.gallery { display: grid; grid-template-columns: repeat(6, 42px); grid-auto-rows: 36px; padding: 4px 0 2px 5px; border-bottom: 2px solid #dddbd9; height: 224px; flex: none; }
.gallery button { display: grid; place-items: center; }
.gallery .chosen { width: 34px; height: 34px; background: #d0cecc; border: 4px solid #605e5c; place-self: center; }
.viz-tabs { display: flex; height: 54px; flex: none; padding-left: 17px; }
.viz-tabs button { width: 60px; display: grid; place-items: center; }
.viz-tabs .active { background: linear-gradient(#f2c811, #f2c811) bottom / 100% 6px no-repeat #eaeaea; border-radius: 0 0 3px 3px; }
.wells { flex: 1; min-height: 0; position: relative; padding: 0 9px 0 5px; }
.wells h3 { font-size: 20px; line-height: 46px; height: 48px; font-weight: 350; padding: 2px 0 0 12px; }
.wells section:first-child h3 { line-height: 36px; height: 40px; padding-top: 0; }
.well { border: 2px dotted #c0bebc; background: #fff; padding: 4px 2px 13px; display: flex; flex-direction: column; gap: 3px; font-size: 20px; }
.well.empty { padding: 0 0 0 14px; height: 42px; line-height: 38px; }
.chip { display: flex; align-items: center; height: 34px; border: 2px solid #c4c2c0; border-radius: 2px; background: #ebeae9; padding: 0 5px 0 6px; gap: 9px; line-height: 28px; margin-right: 1px; }
.chip span { flex: 1; padding-bottom: 2px; }
.thumb { position: absolute; right: 0; top: -2px; width: 9px; height: 294px; border-radius: 5px; background: #d2d0ce; }

.search { display: flex; align-items: center; height: 45px; flex: none; margin: 6px 6px 6px 5px; border: 2px solid #c8c6c4; border-radius: 2px; background: #fff; padding-left: 16px; gap: 12px; }
.search input { border: 0; outline: 0; background: none; font: inherit; font-size: 20px; flex: 1; min-width: 0; padding: 0 0 2px; }
.search input::placeholder { color: #000; opacity: 1; }
.tree { border-top: 2px solid #e1dfdd; font-size: 20px; padding-top: 16px; }
.table-row { display: flex; height: 44px; padding-left: 5px; align-items: flex-start; }
.table-row .fold-up { margin: 12px 10px 0 0; }
.table-row svg + svg { margin: 8px 8px 0 0; }
.table-row strong { font-weight: 700; line-height: 30px; }
.field { display: flex; align-items: center; height: 36px; line-height: 32px; }
.expand { width: 30px; margin-left: 17px; }
.field input { appearance: none; width: 18px; height: 18px; border: 2px solid #7a7876; border-radius: 3px; margin: 0; background: #f3f2f1; }
.field input:checked { border: 0; background: #f2c811; display: grid; place-items: center; }
.field input:checked::after { content: ""; width: 9px; height: 5px; border: solid #333; border-width: 0 0 1px 1px; transform: rotate(-45deg); margin-top: -4px; }
.kind { width: 31px; margin-left: 6px; }
.kind.sum { padding-left: 2px; }
.kind + span { white-space: nowrap; }

.status { height: 32px; flex: none; background: #f3f2f1; border-top: 2px solid #d0cfcd; font-size: 18px; line-height: 30px; padding-left: 12px; }
.taskbar { height: 2px; flex: none; background: #252423; }
.taskbar i { display: block; height: 2px; width: 27%; margin-left: 72px; background: #c0bebc; }
</style>
